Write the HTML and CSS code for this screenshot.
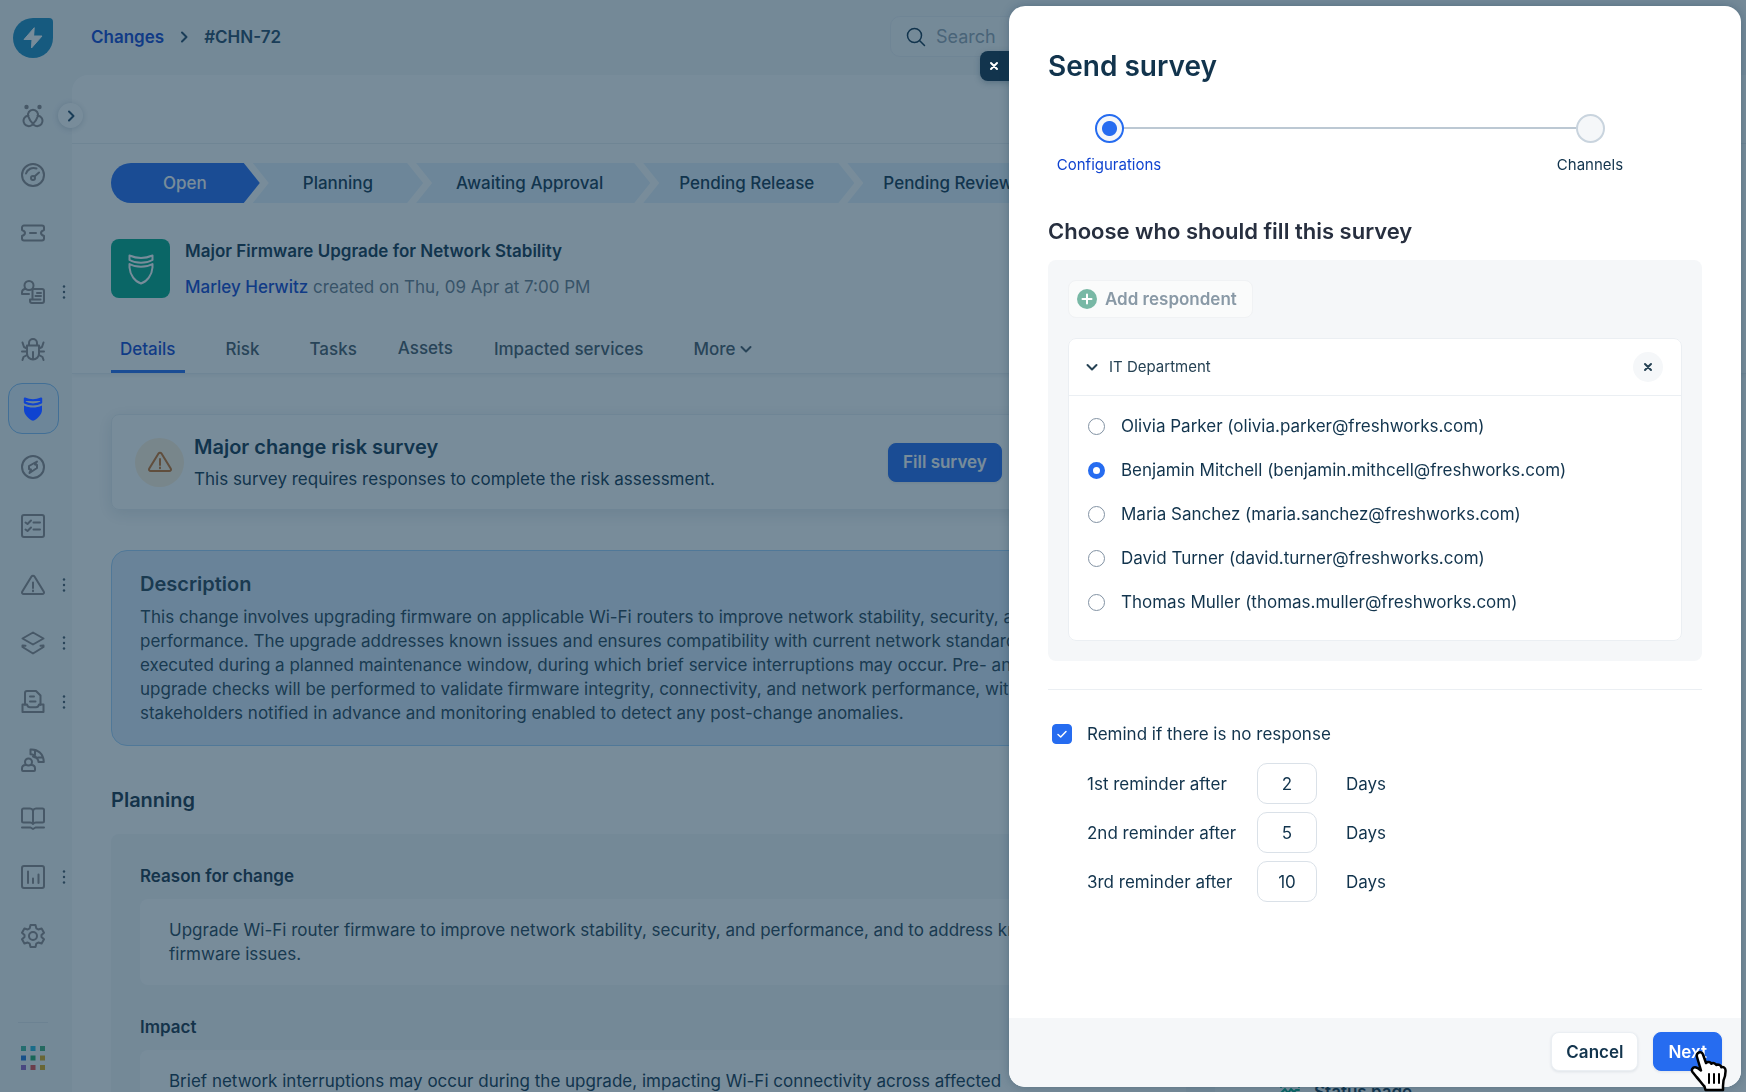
FILE: index.html
```
<!DOCTYPE html>
<html lang="en">
<head>
  <meta charset="UTF-8">
  <title>#CHN-72 - Send survey</title>
  <link rel="stylesheet" href="styles.css">
</head>
<body>
  <div class="app">
    <aside class="sidebar">
      <a class="logo" href="#" aria-label="Home">
        <svg width="40" height="40" viewBox="0 0 40 40"><path d="M20 0h16a4 4 0 0 1 4 4v16A20 20 0 1 1 20 0z" fill="#1d8cc0"/><path d="M21 10l-10 11.500h8l-.5 8.500 10.500-12h-8z" fill="#fff" stroke="#fff" stroke-width="1" stroke-linejoin="round"/></svg>
      </a>
      <nav class="side-nav" aria-label="Modules">
        <a class="side-item" href="#" aria-label="Freddy">
          <svg class="icon" viewBox="0 0 24 24"><circle cx="5.500" cy="3" r="2.200" class="fill"/><circle cx="18.500" cy="3" r="2.200" class="fill"/><path d="M7.300 12.500a5 5 0 1 1 9.400 0c-1 3.500-3 6-5.700 8.500a5.200 5.200 0 1 1-6.500-8.300c1-.6 1.800-.9 3-1M16.500 11.700c1.200.1 2 .4 3 1A5.200 5.200 0 1 1 13 21c-2.700-2.500-4.700-5-5.700-8.500"/></svg>
        </a>
        <a class="side-item" href="#" aria-label="Dashboard">
          <svg class="icon" viewBox="0 0 24 24"><circle cx="12" cy="12" r="11"/><path d="M5 10.500c1.500-4.500 6-6.500 10.500-5M18 9.500l-4.500 4"/><circle cx="12" cy="15" r="2"/></svg>
        </a>
        <a class="side-item" href="#" aria-label="Tickets">
          <svg class="icon" viewBox="0 0 24 24"><path d="M3 4.500h18a2 2 0 0 1 2 2v2.500c-2 .800-3 1.800-3 3s1 2.200 3 3v2.500a2 2 0 0 1-2 2H3a2 2 0 0 1-2-2V15c2-.800 3-1.800 3-3s-1-2.200-3-3V6.500a2 2 0 0 1 2-2zM9 12h6"/></svg>
        </a>
        <a class="side-item" href="#" aria-label="Requests">
          <svg class="icon" viewBox="0 0 24 24"><circle cx="8" cy="5.500" r="4.500"/><path d="M8 14H1v-1.500C1 10.500 2.500 9 4.500 9M12 9h9a2 2 0 0 1 2 2v10a2 2 0 0 1-2 2H11a2 2 0 0 1-2-2v-1.500h2.500V9.500M16 13h4M14.500 16h5.500M12.500 19.500h7"/></svg>
          <svg class="dots" viewBox="0 0 4 14"><circle cx="2" cy="1.500" r="1.200"/><circle cx="2" cy="7" r="1.200"/><circle cx="2" cy="12.500" r="1.200"/></svg>
        </a>
        <a class="side-item" href="#" aria-label="Problems">
          <svg class="icon" viewBox="0 0 24 24"><path d="M8 7V5a4 4 0 0 1 8 0v2M6 7.500h12v8a6 6 0 0 1-12 0zM12 14v7M6 10.500L3 9 1.500 4.500M18 10.500L21 9l1.500-4.500M6 13.500H1M18 13.500h5M6 17l-3.500 2L1.500 22M18 17l3.500 2 1 3"/></svg>
        </a>
        <a class="side-item active" href="#" aria-label="Changes">
          <svg class="icon" viewBox="0 0 24 24"><path class="fill" d="M3 8.500C6 10 9 10.600 12 10.600s6-.6 9-2.100V13c0 4.500-5 9.500-9 10.800C8 22.500 3 17.500 3 13z"/><path d="M3.800 1.500C6 2.500 9 3.300 12 3.300S18 2.500 20.200 1.500v4C18 6.700 15 7.400 12 7.400S6 6.700 3.800 5.500z"/></svg>
        </a>
        <a class="side-item" href="#" aria-label="Releases">
          <svg class="icon" viewBox="0 0 24 24"><circle cx="12" cy="12" r="11"/><path d="M16 6.500l-8 4.500v3l2 .5-1.500 3.500 7.500-5v-3l-2-.5z"/></svg>
        </a>
        <a class="side-item" href="#" aria-label="Tasks">
          <svg class="icon" viewBox="0 0 24 24"><rect x="1" y="1" width="22" height="22" rx="2"/><path d="M4.500 8.500l2 1.500L10 6.500M12.500 8.500H19M4.500 15.500l2 1.500L10 13.500M12.500 15.500H19"/></svg>
        </a>
        <a class="side-item" href="#" aria-label="Alerts">
          <svg class="icon" viewBox="0 0 24 24"><path d="M10.500 3.500a1.800 1.800 0 0 1 3 0l9.200 15c.7 1.200 0 2.500-1.500 2.500H2.800c-1.500 0-2.200-1.300-1.500-2.500zM12 9.500v5.500M12 17.500v.800"/></svg>
          <svg class="dots" viewBox="0 0 4 14"><circle cx="2" cy="1.500" r="1.200"/><circle cx="2" cy="7" r="1.200"/><circle cx="2" cy="12.500" r="1.200"/></svg>
        </a>
        <a class="side-item" href="#" aria-label="Assets">
          <svg class="icon" viewBox="0 0 24 24"><path d="M12 1.500L22.500 7.500 12 13.500 1.500 7.500zM1.500 16v-1.500l3 .2M1.500 16L12 22.500 22.500 16v-1.500l-3 .2"/></svg>
          <svg class="dots" viewBox="0 0 4 14"><circle cx="2" cy="1.500" r="1.200"/><circle cx="2" cy="7" r="1.200"/><circle cx="2" cy="12.500" r="1.200"/></svg>
        </a>
        <a class="side-item" href="#" aria-label="Inventory">
          <svg class="icon" viewBox="0 0 24 24"><path d="M4 15V3a2 2 0 0 1 2-2h9l4.500 4.500V15M9 6.500h4M9 11.500h5.500M1.500 14.500H6c.5 2 1.500 2.800 3 2.800h6c1.500 0 2.500-.8 3-2.800h4.500V22h-21z"/></svg>
          <svg class="dots" viewBox="0 0 4 14"><circle cx="2" cy="1.500" r="1.200"/><circle cx="2" cy="7" r="1.200"/><circle cx="2" cy="12.500" r="1.200"/></svg>
        </a>
        <a class="side-item" href="#" aria-label="On-call">
          <svg class="icon" viewBox="0 0 24 24"><circle cx="7.500" cy="14" r="3.500"/><path d="M4.500 17C2.500 17 1 18.500 1 20.500V22c0 .6.400 1 1 1h11c.6 0 1-.4 1-1v-1.500c0-2-1.500-3.500-3.500-3.500M9.500 1.500C17 1 22.500 6 22.800 14h-5.300c0-1-.3-2-1-3l-3-3.500c-1.200-.8-2.500-1.200-4-1.200zM14 2.500v4l-2 2M17 9.500h5M13 9l3 1"/></svg>
        </a>
        <a class="side-item" href="#" aria-label="Solutions">
          <svg class="icon" viewBox="0 0 24 24"><path d="M12 3.500C11.500 2.300 10.500 1.500 9 1.500H2.500A1.500 1.500 0 0 0 1 3v11c0 .8.700 1.500 1.500 1.500H9c1.500 0 2.500.5 3 1.500.5-1 1.500-1.500 3-1.500h6.500c.8 0 1.500-.7 1.500-1.500V3c0-.8-.7-1.500-1.500-1.500H15c-1.500 0-2.500.8-3 2zM12 3.500V17M1 20.500h8.500l2.500 1.500 2.500-1.500H23"/></svg>
        </a>
        <a class="side-item" href="#" aria-label="Analytics">
          <svg class="icon" viewBox="0 0 24 24"><rect x="1" y="1" width="22" height="22" rx="2"/><path d="M7 6.500V18M12 13.500V18M17.500 9.500V18"/></svg>
          <svg class="dots" viewBox="0 0 4 14"><circle cx="2" cy="1.500" r="1.200"/><circle cx="2" cy="7" r="1.200"/><circle cx="2" cy="12.500" r="1.200"/></svg>
        </a>
        <a class="side-item" href="#" aria-label="Admin">
          <svg class="icon" viewBox="0 0 24 24"><path d="M9.500 1h5l.8 3.300 2 1.200 3.300-1 2.400 4.200-2.500 2.300v2l2.500 2.300-2.400 4.200-3.300-1-2 1.200-.8 3.300h-5l-.8-3.300-2-1.200-3.300 1L1 15.300l2.500-2.300v-2L1 8.700l2.400-4.200 3.300 1 2-1.200z"/><circle cx="12" cy="12" r="4"/></svg>
        </a>
      </nav>
      <div class="side-bottom">
        <button class="app-grid" aria-label="Switch product">
          <svg width="24" height="24" viewBox="0 0 24 24"><rect width="5" height="5" fill="#3fb89c"/><rect x="9.500" width="5" height="5" fill="#27b5d8"/><rect x="19" width="5" height="5" fill="#3fae79"/><rect y="9.500" width="5" height="5" fill="#1f74d8"/><rect x="9.500" y="9.500" width="5" height="5" fill="#1fa867"/><rect x="19" y="9.500" width="5" height="5" fill="#dba816"/><rect y="19" width="5" height="5" fill="#9363c4"/><rect x="9.500" y="19" width="5" height="5" fill="#e04848"/><rect x="19" y="19" width="5" height="5" fill="#dba816"/></svg>
        </button>
      </div>
      <button class="expand" aria-label="Expand menu">
        <svg width="12" height="12" viewBox="0 0 12 12"><path d="M4 1.500L8.500 6 4 10.500"/></svg>
      </button>
    </aside>

    <div class="page">
      <header class="topbar">
        <nav class="breadcrumb" aria-label="Breadcrumb">
          <a href="#">Changes</a>
          <svg width="12" height="12" viewBox="0 0 12 12"><path d="M4 1.500L8.500 6 4 10.500"/></svg>
          <span>#CHN-72</span>
        </nav>
        <label class="search">
          <svg width="20" height="20" viewBox="0 0 20 20"><circle cx="8.500" cy="8.500" r="7"/><path d="M13.500 13.500L18.500 18.500"/></svg>
          <input type="text" placeholder="Search" aria-label="Search">
        </label>
      </header>

      <main class="main">
        <div class="toolbar"></div>
        <section class="summary">
          <ol class="stages">
            <li class="stage current">Open</li>
            <li class="stage short">Planning</li>
            <li class="stage long">Awaiting Approval</li>
            <li class="stage">Pending Release</li>
            <li class="stage">Pending Review</li>
          </ol>
          <div class="change-head">
            <div class="change-icon">
              <svg width="28" height="32" viewBox="0 0 28 32"><path d="M2.500 2.500C6 4 10 5 14 5s8-1 11.500-2.500V7C22 9 18 9.800 14 9.800S6 9 2.500 7zM2.500 11c3.500 2 7.500 2.800 11.500 2.800s8-.8 11.500-2.800v3.500C25 22 20 28.500 14 30.500 8 28.500 3 22 2.500 14.500z"/></svg>
            </div>
            <div>
              <h1>Major Firmware Upgrade for Network Stability</h1>
              <p><a href="#">Marley Herwitz</a> created on Thu, 09 Apr at 7:00 PM</p>
            </div>
          </div>
          <nav class="tabs" aria-label="Change sections">
            <a class="tab selected" href="#">Details</a>
            <a class="tab" href="#">Risk</a>
            <a class="tab" href="#">Tasks</a>
            <a class="tab compact" href="#">Assets</a>
            <a class="tab" href="#">Impacted services</a>
            <button class="tab" type="button">More
              <svg width="12" height="12" viewBox="0 0 12 12"><path d="M1.500 4L6 8.500 10.500 4"/></svg>
            </button>
          </nav>
        </section>

        <div class="body-grid">
          <div class="details">
            <section class="risk-card">
              <div class="risk-icon">
                <svg class="icon" viewBox="0 0 24 24"><path d="M10.500 3.500a1.800 1.800 0 0 1 3 0l9.200 15c.7 1.200 0 2.500-1.500 2.500H2.800c-1.500 0-2.200-1.300-1.500-2.500zM12 9v6M12 17.500v.8"/></svg>
              </div>
              <div class="risk-text">
                <h2>Major change risk survey</h2>
                <p>This survey requires responses to complete the risk assessment.</p>
              </div>
              <button class="btn primary" type="button">Fill survey</button>
            </section>

            <section class="description">
              <h2>Description</h2>
              <p>This change involves upgrading firmware on applicable Wi-Fi routers to improve network stability, security, and<br>
                performance. The upgrade addresses known issues and ensures compatibility with current network standards,<br>
                executed during a planned maintenance window, during which brief service interruptions may occur. Pre- and<br>
                upgrade checks will be performed to validate firmware integrity, connectivity, and network performance, with<br>
                stakeholders notified in advance and monitoring enabled to detect any post-change anomalies.</p>
            </section>

            <h2 class="section-title">Planning</h2>
            <section class="planning">
              <h3>Reason for change</h3>
              <div class="field">Upgrade Wi-Fi router firmware to improve network stability, security, and performance, and to address known<br>firmware issues.</div>
              <h3>Impact</h3>
              <div class="field dark">Brief network interruptions may occur during the upgrade, impacting Wi-Fi connectivity across affected</div>
            </section>
          </div>
          <div class="side-panel">
            <svg width="20" height="20" viewBox="0 0 20 20"><path d="M1 5V1h18v4M1 11l4-4 3 4 3-4 3 3 2-2h3"/></svg>
            <span>Status page</span>
          </div>
        </div>
      </main>
    </div>
  </div>

  <div class="overlay"></div>

  <div class="drawer" role="dialog" aria-labelledby="drawer-title">
    <button class="drawer-close" type="button" aria-label="Close">
      <svg width="10" height="10" viewBox="0 0 10 10"><path d="M2 2l6 6M8 2l-6 6"/></svg>
    </button>
    <form class="drawer-inner">
      <div class="drawer-body">
        <h2 id="drawer-title">Send survey</h2>
        <ol class="wizard">
          <li class="done"><span class="ring"></span>Configurations</li>
          <li><span class="ring"></span>Channels</li>
        </ol>

        <h3>Choose who should fill this survey</h3>
        <div class="respondents">
          <button class="add" type="button" disabled>
            <svg width="20" height="20" viewBox="0 0 20 20"><circle cx="10" cy="10" r="10" fill="#78b8a5" stroke="none"/><path d="M10 5.500v9M5.500 10h9" stroke="#fff"/></svg>
            Add respondent
          </button>
          <fieldset class="group">
            <div class="group-head">
              <svg width="12" height="12" viewBox="0 0 12 12"><path d="M1.500 4L6 8.500 10.500 4"/></svg>
              <span>IT Department</span>
              <button class="remove" type="button" aria-label="Remove IT Department">
                <svg width="10" height="10" viewBox="0 0 10 10"><path d="M2 2l6 6M8 2l-6 6"/></svg>
              </button>
            </div>
            <div class="group-list">
              <label><input type="radio" name="respondent">Olivia Parker (olivia.parker@freshworks.com)</label>
              <label><input type="radio" name="respondent" checked>Benjamin Mitchell (benjamin.mithcell@freshworks.com)</label>
              <label><input type="radio" name="respondent">Maria Sanchez (maria.sanchez@freshworks.com)</label>
              <label><input type="radio" name="respondent">David Turner (david.turner@freshworks.com)</label>
              <label><input type="radio" name="respondent">Thomas Muller (thomas.muller@freshworks.com)</label>
            </div>
          </fieldset>
        </div>

        <hr>

        <label class="remind">
          <span class="check">
            <input type="checkbox" checked>
            <svg width="12" height="12" viewBox="0 0 12 12"><path d="M2 6.500L4.700 9 10 3.500"/></svg>
          </span>
          Remind if there is no response
        </label>
        <div class="reminders">
          <label for="r1">1st reminder after</label><input type="text" id="r1" value="2"><span>Days</span>
          <label for="r2">2nd reminder after</label><input type="text" id="r2" value="5"><span>Days</span>
          <label for="r3">3rd reminder after</label><input type="text" id="r3" value="10"><span>Days</span>
        </div>
      </div>
      <footer class="drawer-footer">
        <button class="btn" type="button">Cancel</button>
        <button class="btn primary" type="button">Next</button>
      </footer>
    </form>
  </div>

  <svg class="cursor" width="38" height="42" viewBox="0 0 38 42"><path d="M8 3c2-1.500 4.300-.5 5 1.500l3 8.500c1.500-1.500 4.500-1.200 5.300.8 1.500-1.300 4.200-.8 5 1.200 2-1 4.500.2 5 2.200 2-.7 4 .5 4.200 2.800.3 4.500-.5 7-2 10.500L33 36v4H15.500l-1-3.500c-3-3-5-6.500-8-9.500L2.500 22c-1.500-2 0-4.800 2.500-4.800 2 0 4 1.500 6 3.300L7 7C6.500 5.300 6.700 4 8 3z" fill="#fff" stroke="#000" stroke-width="2.500" stroke-linejoin="round"/><path d="M19 24v9M24 24v9M29 24v9" stroke="#000" stroke-width="2" fill="none"/></svg>
</body>
</html>
```
FILE: styles.css
```
* {
  box-sizing: border-box;
}

body {
  margin: 0;
  height: 100vh;
  overflow: hidden;
  font-family: Inter, sans-serif;
  font-size: 17px;
  line-height: 24px;
  color: #12344d;
  background: #f5f7f9;
}

h1, h2, h3, p, ol {
  margin: 0;
  padding: 0;
  font-size: inherit;
  list-style: none;
}

a {
  color: #0f43d0;
  text-decoration: none;
}

button, input {
  font: inherit;
  color: inherit;
}

button {
  border: none;
  background: none;
  padding: 0;
  cursor: pointer;
}

svg {
  flex: none;
  fill: none;
  stroke: currentColor;
  stroke-width: 2;
  stroke-linecap: round;
  stroke-linejoin: round;
}

.logo svg,
.dots,
.app-grid svg,
.cursor {
  stroke: none;
}

.app {
  display: flex;
  height: 100vh;
}

/* sidebar */
.sidebar {
  position: relative;
  width: 72px;
  display: flex;
  flex-direction: column;
}

.logo {
  height: 87px;
  padding: 18px 13px;
}

.side-nav {
  flex: 1;
  display: flex;
  flex-direction: column;
}

.side-item {
  position: relative;
  flex: 1;
  display: flex;
  align-items: center;
  padding-left: 21px;
  color: #475867;
}

.icon {
  width: 24px;
  height: 24px;
  stroke-width: 2;
}

.icon .fill {
  fill: currentColor;
  stroke: none;
}

.side-item .icon {
  z-index: 1;
}

.side-item.active {
  color: #0f43d0;
}

.side-item.active::before {
  content: "";
  position: absolute;
  left: 8px;
  width: 49px;
  height: 49px;
  border: 1px solid #82bdf5;
  border-radius: 14px;
  background: #e5f2fd;
}

.dots {
  width: 4px;
  height: 14px;
  margin-left: 17px;
  fill: #475867;
}

.side-bottom {
  height: 127px;
  padding: 57px 18px 0;
}

.app-grid {
  width: 30px;
  padding: 23px 2px;
  border-top: 1px solid #e3e8ed;
}

.expand {
  position: absolute;
  top: 103px;
  left: 58px;
  width: 25px;
  height: 25px;
  border-radius: 50%;
  background: #fff;
  color: #264966;
  box-shadow: 0 1px 6px rgba(18, 52, 77, 0.2);
  display: flex;
  align-items: center;
  justify-content: center;
}

/* header */
.page {
  flex: 1;
  min-width: 0;
  display: flex;
  flex-direction: column;
}

.topbar {
  height: 75px;
  flex: none;
  display: flex;
  align-items: flex-start;
  padding: 16px 19px;
}

.breadcrumb {
  width: 799px;
  height: 41px;
  display: flex;
  align-items: center;
  gap: 14px;
  font-weight: 600;
  color: #264966;
}

.search {
  flex: 1;
  height: 41px;
  display: flex;
  align-items: center;
  gap: 8px;
  padding: 0 15px;
  border: 1px solid #ebeff3;
  border-radius: 10px;
  background: #f9fafb;
}

.search svg {
  stroke-width: 1.500;
}

.search input {
  width: 100%;
  border: none;
  background: none;
  outline: none;
  font-size: 18px;
}

.search input::placeholder {
  color: #92a2b1;
}

.main {
  flex: 1;
  min-height: 0;
  overflow: hidden;
  background: #fff;
  border-top-left-radius: 16px;
}

.toolbar {
  height: 69px;
  border-bottom: 1px solid #ebeff3;
}

.summary {
  padding: 19px 39px 0;
  border-bottom: 1px solid #ebeff3;
  box-shadow: 0 2px 4px rgba(18, 52, 77, 0.06);
}

.stages {
  display: flex;
  height: 40px;
}

.stage {
  display: flex;
  align-items: center;
  padding: 0 40px 0 36px;
  margin-right: -7px;
  font-weight: 500;
  white-space: nowrap;
  background: #e5f2fd;
  clip-path: polygon(0 0, calc(100% - 16px) 0, 100% 50%, calc(100% - 16px) 100%, 0 100%, 16px 50%);
}

.stage.short {
  padding: 0 50px;
}

.stage.long {
  padding: 0 47px 0 40px;
}

.stage.current {
  padding: 0 53px 0 52px;
  border-radius: 20px 0 0 20px;
  background: #266cf0;
  color: #fff;
  clip-path: polygon(0 0, calc(100% - 16px) 0, 100% 50%, calc(100% - 16px) 100%, 0 100%);
}

.change-head {
  display: flex;
  gap: 15px;
  margin-top: 36px;
}

.change-icon {
  width: 59px;
  height: 59px;
  border-radius: 8px;
  background: #00a886;
  color: #fff;
  display: flex;
  align-items: center;
  justify-content: center;
}

.change-head h1 {
  font-weight: 600;
}

.change-head p {
  margin-top: 12px;
  color: #6b7c8c;
}

.change-head a {
  font-weight: 500;
}

.tabs {
  display: flex;
  gap: 32px;
  margin-top: 26px;
  height: 48px;
}

.tab {
  display: flex;
  align-items: center;
  gap: 5px;
  padding: 2px 9px 0;
  border-bottom: 3px solid transparent;
  font-weight: 500;
  color: #475867;
}

.tab.compact {
  padding: 0;
}

.tab.selected {
  color: #0f43d0;
  border-bottom-color: #266cf0;
}

/* details */
.body-grid {
  display: grid;
  grid-template-columns: 1fr 388px;
  gap: 40px;
  padding: 40px 103px 0 39px;
}

.risk-card {
  display: flex;
  align-items: center;
  height: 96px;
  padding: 0 23px;
  border: 1px solid #ebeff3;
  border-radius: 8px;
  box-shadow: 0 4px 16px rgba(18, 52, 77, 0.12);
}

.risk-icon {
  width: 49px;
  height: 49px;
  border-radius: 50%;
  background: #fef1dc;
  color: #c76f28;
  display: flex;
  align-items: center;
  justify-content: center;
}

.risk-text {
  width: 704px;
  padding: 2px 0 0 10px;
}

.risk-text h2 {
  font-size: 20px;
  font-weight: 600;
  margin-bottom: 8px;
}

.btn {
  height: 39px;
  padding: 0 14px;
  border: 1px solid #ebeff3;
  border-radius: 8px;
  background: #fff;
  font-weight: 600;
  box-shadow: 0 1px 3px rgba(18, 52, 77, 0.1);
}

.btn.primary {
  border-color: #266cf0;
  background: #266cf0;
  color: #fff;
}

.description {
  margin-top: 40px;
  padding: 21px 28px 20px;
  border: 1px solid #a2d0fa;
  border-radius: 16px;
  background: #dcebfc;
  color: #264254;
  white-space: nowrap;
}

.description h2 {
  font-size: 20px;
  font-weight: 600;
  margin-bottom: 9px;
}

.section-title {
  margin: 42px 0 22px;
  font-size: 20px;
  font-weight: 600;
  color: #183247;
}

.planning {
  padding: 30px 29px;
  border-radius: 8px;
  background: #f5f7f9;
  color: #264254;
}

.planning h3 {
  font-weight: 600;
  color: #183247;
}

.field {
  margin: 11px 0 30px;
  padding: 19px 29px;
  border-radius: 8px;
  background: #fff;
  white-space: nowrap;
}

.field.dark {
  color: #12344d;
}

.side-panel {
  display: flex;
  align-items: center;
  gap: 14px;
  height: 24px;
  margin-top: 666px;
  padding-left: 25px;
  font-weight: 600;
}

.side-panel svg {
  color: #00a886;
}

.overlay {
  position: fixed;
  inset: 0;
  background: rgba(18, 52, 77, 0.57);
}

/* drawer */
.drawer {
  position: fixed;
  top: 6px;
  right: 5px;
  bottom: 5px;
  width: 732px;
}

.drawer-close {
  position: absolute;
  top: 45px;
  left: -29px;
  width: 40px;
  height: 30px;
  padding-left: 9px;
  border-radius: 8px 0 0 8px;
  background: #12344d;
  color: #fff;
  display: flex;
  align-items: center;
  box-shadow: 0 2px 6px rgba(18, 52, 77, 0.3);
}

.drawer-inner {
  position: relative;
  height: 100%;
  display: flex;
  flex-direction: column;
  border-radius: 16px;
  background: #fff;
  overflow: hidden;
  box-shadow: 0 0 10px rgba(18, 52, 77, 0.3);
}

.drawer-body {
  flex: 1;
  padding: 40px 39px 0;
}

.drawer-body h2 {
  font-size: 28px;
  line-height: 40px;
  font-weight: 600;
}

/* the connecting line runs between the two ring centres */
.wizard {
  display: flex;
  justify-content: space-between;
  margin-top: 28px;
  padding: 0 112px 0 61px;
  font-size: 15px;
  line-height: 20px;
  background: linear-gradient(#bcc8d3, #bcc8d3) no-repeat 0 13px / 100% 2px;
  background-origin: content-box;
}

.wizard li {
  width: 0;
  display: flex;
  flex-direction: column;
  align-items: center;
  gap: 12px;
}

.ring {
  flex: none;
  width: 29px;
  height: 29px;
  border: 2px solid #c9d4de;
  border-radius: 50%;
  background: #f5f7f9;
}

.done {
  color: #0f43d0;
}

.done .ring {
  border-color: #266cf0;
  background: radial-gradient(circle, #266cf0 7px, #f5f7f9 8px);
}

.drawer-body h3 {
  margin-top: 42px;
  font-size: 22px;
  line-height: 28px;
  font-weight: 600;
  color: #272f3f;
}

.respondents {
  margin-top: 15px;
  padding: 20px;
  border-radius: 8px;
  background: #f5f7f9;
}

.add {
  height: 38px;
  display: flex;
  align-items: center;
  gap: 8px;
  padding: 0 15px 0 8px;
  border: 1px solid #f0f2f4;
  border-radius: 8px;
  background: #fafbfb;
  font-weight: 600;
  color: #8999a6;
}

.group {
  min-width: 0;
  margin: 20px 0 0;
  padding: 0;
  border: 1px solid #ebeff3;
  border-radius: 8px;
  background: #fff;
}

.group-head {
  display: flex;
  align-items: center;
  gap: 11px;
  height: 57px;
  padding: 0 18px 0 17px;
  border-bottom: 1px solid #ebeff3;
  font-size: 15px;
  color: #264254;
}

.remove {
  width: 30px;
  height: 30px;
  margin-left: auto;
  border-radius: 50%;
  background: #f5f7f9;
  display: flex;
  align-items: center;
  justify-content: center;
}

.group-list {
  display: grid;
  gap: 20px;
  padding: 18px 19px 26px;
}

.group-list label {
  display: flex;
  align-items: center;
  gap: 16px;
}

.group-list input {
  appearance: none;
  width: 17px;
  height: 17px;
  margin: 0;
  border: 1px solid #8292a3;
  border-radius: 50%;
}

.group-list input:checked {
  border: 5px solid #266cf0;
}

.drawer-body hr {
  margin: 28px 0 32px;
  border: none;
  border-top: 1px solid #ebeff3;
}

.remind {
  display: flex;
  align-items: center;
  gap: 15px;
  padding-left: 4px;
}

.check {
  display: grid;
  place-items: center;
}

.check > * {
  grid-area: 1 / 1;
}

.check svg {
  color: #fff;
  stroke-width: 1.500;
  z-index: 1;
  pointer-events: none;
}

.check input {
  appearance: none;
  width: 20px;
  height: 20px;
  margin: 0;
  border: 1px solid #92a2b1;
  border-radius: 4px;
}

.check input:checked {
  border-color: #266cf0;
  background: #266cf0;
}

.reminders {
  display: grid;
  grid-template-columns: 170px 60px auto;
  justify-content: start;
  align-items: center;
  row-gap: 8px;
  margin-top: 17px;
  padding-left: 39px;
}

.reminders input {
  width: 60px;
  height: 41px;
  padding: 0;
  border: 1px solid #dae1e8;
  border-radius: 10px;
  text-align: center;
}

.reminders span {
  padding-left: 29px;
}

.drawer-footer {
  display: flex;
  justify-content: flex-end;
  gap: 15px;
  padding: 14px 19px 16px;
  background: #f5f7f9;
}

.cursor {
  position: fixed;
  right: 18px;
  bottom: 0;
  pointer-events: none;
}
```
